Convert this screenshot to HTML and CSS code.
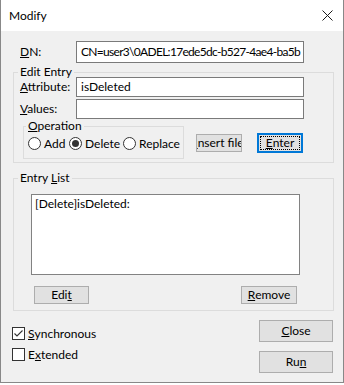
FILE: index.html
```html
<!DOCTYPE html>
<html lang="en">
<head>
    <meta charset="UTF-8">
    <title>Modify</title>
    <link rel="stylesheet" href="styles.css">
</head>
<body>
    <div class="window">
        <div class="titlebar">
            <span class="title">Modify</span>
            <svg class="close" width="11" height="11" viewBox="0 0 11 11"><path d="M0.5 0.5 L10.5 10.5 M10.5 0.5 L0.5 10.5" stroke="#1a1a1a" stroke-width="1" fill="none"/></svg>
        </div>
        <div class="content">
            <div class="field-row dn-row">
                <label><u>D</u>N:</label>
                <div class="textbox">CN=user3\0ADEL:17ede5dc-b527-4ae4-ba5b</div>
            </div>

            <fieldset class="group edit-entry">
                <legend>Edit Entry</legend>
                <div class="field-row">
                    <label><u>A</u>ttribute:</label>
                    <div class="textbox">isDeleted</div>
                </div>
                <div class="field-row values-row">
                    <label><u>V</u>alues:</label>
                    <div class="textbox"></div>
                </div>
                <div class="op-row">
                    <fieldset class="group operation">
                        <legend><u>O</u>peration</legend>
                        <div class="radios">
                            <span class="option opt-add"><span class="radio"></span>Add</span>
                            <span class="option opt-delete"><span class="radio checked"></span>Delete</span>
                            <span class="option"><span class="radio"></span>Replace</span>
                        </div>
                    </fieldset>
                    <div class="btn btn-insert"><span><u>I</u>nsert file</span></div>
                    <div class="btn btn-default"><span class="focus"><u>E</u>nter</span></div>
                </div>
            </fieldset>

            <fieldset class="group entry-list">
                <legend>Entry <u>L</u>ist</legend>
                <div class="listbox">[Delete]isDeleted:</div>
                <div class="list-buttons">
                    <div class="btn btn-edit">Edi<u>t</u></div>
                    <div class="btn btn-remove"><u>R</u>emove</div>
                </div>
            </fieldset>

            <div class="footer">
                <div class="checks">
                    <div class="check-row"><span class="checkbox"><svg width="11" height="11" viewBox="0 0 11 11"><path d="M1.5 5.5 L4 8 L9.5 2.5" stroke="#333" stroke-width="1.1" fill="none"/></svg></span><u>S</u>ynchronous</div>
                    <div class="check-row"><span class="checkbox"></span>E<u>x</u>tended</div>
                </div>
                <div class="actions">
                    <div class="btn btn-wide"><u>C</u>lose</div>
                    <div class="btn btn-wide btn-run">Ru<u>n</u></div>
                </div>
            </div>
        </div>
    </div>
</body>
</html>
```

FILE: styles.css
```css
* {
    box-sizing: border-box;
}
body {
    margin: 0;
    background: #fff;
    font-family: Lato, "Noto Sans", sans-serif;
    font-size: 12px;
    line-height: 14px;
    color: #000;
}
u {
    text-underline-offset: 1px;
}
.window {
    width: 344px;
    height: 383px;
    background: #f0f0f0;
    border: 1px solid #888;
    border-top: none;
}
.titlebar {
    height: 31px;
    background: #fff;
    display: flex;
    align-items: center;
    justify-content: space-between;
    padding: 0 10px 0 8px;
}
.title {
    font-size: 12px;
    margin-top: 1px;
}
.content {
    padding: 10px 9px 0 12px;
}
.field-row {
    display: flex;
    align-items: center;
}
.field-row label {
    width: 56px;
}
.dn-row {
    padding-left: 7px;
}
.textbox {
    width: 228px;
    height: 20px;
    border: 1px solid #7a7a7a;
    background: #fff;
    padding: 0 4px;
    line-height: 18px;
    white-space: nowrap;
    overflow: hidden;
}
.dn-row .textbox {
    height: 22px;
    line-height: 20px;
    letter-spacing: -0.7px;
}
.values-row {
    margin-top: 2px;
}
.group {
    margin: 0;
    border: 1px solid #dcdcdc;
    min-width: 0;
}
.group legend {
    line-height: 10px;
    padding: 0 2px;
    margin-left: -2px;
}
.edit-entry {
    margin-top: 4px;
    width: 321px;
    padding: 0 0 3px 6px;
}
.op-row {
    display: flex;
    align-items: flex-start;
    margin-top: 2px;
}
.operation {
    margin-left: 3px;
    width: 161px;
    padding: 6px 0 8px 4px;
}
.radios {
    display: flex;
    align-items: center;
    height: 13px;
}
.option {
    display: flex;
    align-items: center;
}
.opt-add {
    width: 41px;
}
.opt-delete {
    width: 54px;
}
.radio {
    width: 13px;
    height: 13px;
    border: 1px solid #333;
    border-radius: 50%;
    background: #fff;
    margin-right: 3px;
    display: flex;
    align-items: center;
    justify-content: center;
}
.radio.checked::after {
    content: "";
    width: 7px;
    height: 7px;
    border-radius: 50%;
    background: #333;
}
.btn {
    display: flex;
    align-items: center;
    justify-content: center;
    background: #e1e1e1;
    border: 1px solid #adadad;
    white-space: nowrap;
    overflow: hidden;
}
.btn-insert {
    margin: 13px 0 0 12px;
    width: 46px;
    height: 18px;
}
.btn-default {
    margin: 12px 0 0 15px;
    width: 46px;
    height: 20px;
    border: 2px solid #0078d7;
    padding: 1px;
    overflow: visible;
}
.focus {
    flex: 1;
    align-self: stretch;
    border: 1px dotted #000;
    display: flex;
    align-items: center;
    justify-content: center;
}
.entry-list {
    margin-top: 10px;
    width: 321px;
    padding: 0 0 6px 6px;
}
.listbox {
    margin: 11px 0 0 11px;
    width: 269px;
    height: 81px;
    border: 1px solid #828282;
    background: #fff;
    padding: 2px 3px;
}
.list-buttons {
    display: flex;
    justify-content: space-between;
    margin: 11px 36px 0 14px;
}
.btn-edit {
    width: 55px;
    height: 18px;
}
.btn-remove {
    width: 56px;
    height: 18px;
}
.footer {
    display: flex;
    justify-content: space-between;
    margin-top: 9px;
}
.checks {
    margin: 7px 0 0 -1px;
}
.check-row {
    display: flex;
    align-items: center;
    height: 13px;
    margin-bottom: 8px;
}
.checkbox {
    width: 13px;
    height: 13px;
    border: 1px solid #333;
    background: #fff;
    margin-right: 3px;
    display: flex;
    align-items: center;
    justify-content: center;
}
.actions {
    margin-right: 1px;
}
.btn-wide {
    width: 74px;
    height: 22px;
}
.btn-run {
    margin-top: 9px;
}
```
